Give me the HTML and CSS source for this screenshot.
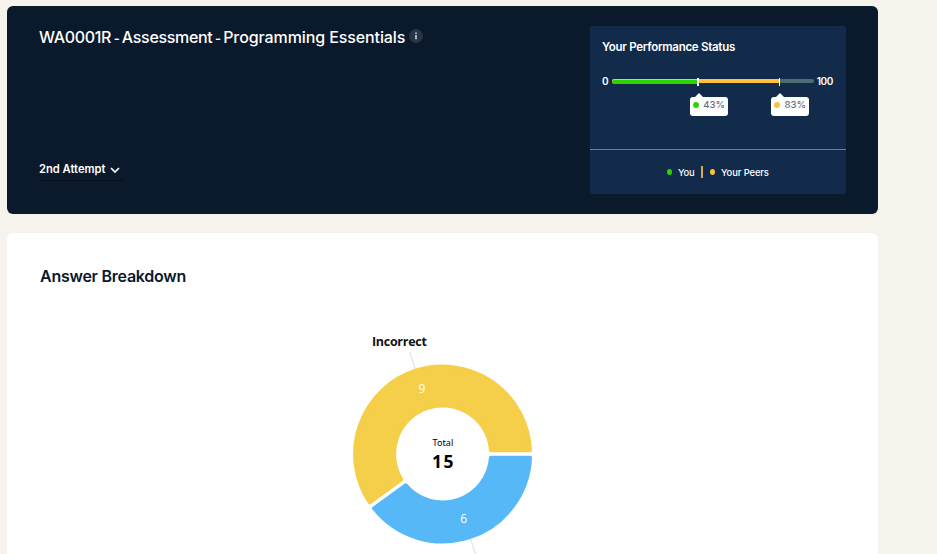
FILE: index.html
```html
<!DOCTYPE html>
<html lang="en">
<head>
<meta charset="utf-8">
<title>Assessment</title>
<link rel="stylesheet" href="styles.css">
</head>
<body>
<main class="page">
  <section class="summary">
    <div class="summary-info">
      <h1 class="title"><span class="title-text">WA0001R<span class="dash"> - </span>Assessment<span class="dash"> - </span><span class="course">Programming Essentials</span></span>
        <svg class="info" viewBox="0 0 14 14"><circle cx="7" cy="7" r="7" fill="#283546"/><path d="M7 3.5V5M7 6V10.2" stroke="#c3c8ce" stroke-width="1.7"/></svg>
      </h1>
      <div class="attempt"><span class="attempt-text">2nd Attempt</span>
        <svg class="chevron" viewBox="0 0 10 6"><path d="M1 1L5 5L9 1" fill="none" stroke="#fff" stroke-width="1.7"/></svg>
      </div>
    </div>
    <aside class="status">
      <div class="status-body">
        <h2 class="status-title">Your Performance Status</h2>
        <div class="scale">
          <span class="min">0</span>
          <div class="track">
            <div class="peers"></div>
            <div class="you"></div>
            <div class="tick tick-you"></div>
            <div class="tick tick-peers"></div>
            <div class="tip tip-you"><i class="dot green"></i><span>43%</span></div>
            <div class="tip tip-peers"><i class="dot amber"></i><span>83%</span></div>
          </div>
          <span class="max">100</span>
        </div>
      </div>
      <div class="legend">
        <i class="dot green"></i><span class="legend-you">You</span><b class="bar"></b><i class="dot amber"></i><span class="legend-peers">Your Peers</span>
      </div>
    </aside>
  </section>
  <section class="breakdown">
    <h2 class="heading">Answer Breakdown</h2>
    <svg class="chart" width="260" height="260" viewBox="-129.6 -130 260 260">
      <path class="leader" d="M-33 -102L-27 -84M27.5 84L33.5 102"/>
      <path class="slice incorrect" d="M-72.9 48.39A87.5 87.5 0 1 1 87.42 -3.7L48.36 -3.7A48.5 48.5 0 1 0 -41.3 25.43Z"/>
      <path class="slice correct" d="M87.42 3.7A87.5 87.5 0 0 1 -68.55 54.38L-36.95 31.42A48.5 48.5 0 0 0 48.36 3.7Z"/>
      <text class="label" x="-70.7" y="-108" textLength="55">Incorrect</text>
      <text class="value" x="-20.7" y="-61">9</text>
      <text class="value" x="21" y="69">6</text>
      <text class="total" x="-10.2" y="-8" textLength="21">Total</text>
      <text class="sum" x="-10.5" y="14" textLength="21.5">15</text>
    </svg>
  </section>
</main>
</body>
</html>
```
FILE: styles.css
```css
* { box-sizing: border-box; }
body {
  margin: 0;
  background: #f6f3ec;
  color: #fff;
  font-family: Inter, "Liberation Sans", sans-serif;
}
h1, h2 { margin: 0; }
.page {
  width: 871px;
  height: 554px;
  margin: 0 0 0 7px;
  padding-top: 6px;
  display: flex;
  flex-direction: column;
  gap: 19px;
}
.summary {
  height: 208px;
  flex: none;
  padding: 20px 32px;
  border-radius: 6px;
  background: #0a192b;
  display: flex;
  justify-content: space-between;
}
.summary-info {
  display: flex;
  flex-direction: column;
  justify-content: space-between;
  align-items: flex-start;
  padding: 1px 0 13px;
}
.title {
  display: flex;
  align-items: center;
  font-size: 16px;
  font-weight: 500;
  line-height: 20px;
  white-space: nowrap;
}
.title-text { width: 370px; letter-spacing: -0.32px; }
.dash {
  display: inline-block;
  width: 10.7px;
  text-align: center;
  font-size: 13px;
  font-weight: 600;
}
.course { letter-spacing: -0.1px; }
.info { width: 14px; height: 14px; margin-top: -3px; }
.attempt {
  width: 86px;
  height: 24px;
  border-bottom: 1px solid #06101c;
  display: flex;
  gap: 5px;
  font-size: 11.2px;
  font-weight: 600;
  line-height: 24px;
  white-space: nowrap;
}
.attempt-text { width: 66px; }
.chevron { width: 10px; height: 6px; margin-top: 10px; }
.status {
  width: 256px;
  height: 168px;
  border-radius: 3px;
  background: #122b4b;
}
.status-body {
  height: 124px;
  padding: 13px 13px 0 12px;
  border-bottom: 1px solid #707f94;
}
.status-title {
  font-size: 11.5px;
  font-weight: 600;
  line-height: 16px;
  letter-spacing: -0.28px;
  white-space: nowrap;
}
.scale {
  display: flex;
  align-items: center;
  margin-top: 18px;
  font-size: 10px;
  font-weight: 600;
  line-height: 16px;
}
.min { width: 10px; }
.max { width: 19px; text-align: right; white-space: nowrap; letter-spacing: -0.4px; }
.track {
  position: relative;
  width: 202px;
  height: 4px;
  border-radius: 2px;
  background: #4b6e72;
}
.peers {
  width: 83%;
  height: 4px;
  border-radius: 2px 0 0 2px;
  background: #ffc13b;
}
.you {
  position: absolute;
  left: 0;
  top: 1px;
  width: 43%;
  height: 4px;
  border-radius: 2px 0 0 2px;
  background: #2bd600;
}
.tick { position: absolute; top: -1px; height: 8px; background: #fff; }
.tick-you { left: 85px; width: 2px; }
.tick-peers { left: 167px; width: 1px; }
.tip {
  position: absolute;
  top: 18px;
  width: 38px;
  height: 19px;
  padding: 0 3px 3px;
  border-radius: 3px;
  background: #fff;
  color: #66707c;
  display: flex;
  align-items: center;
  justify-content: space-between;
  font-size: 9.6px;
  font-weight: 500;
}
.tip::before {
  content: "";
  position: absolute;
  left: 5px;
  top: -4px;
  border: 4px solid transparent;
  border-top: 0;
  border-bottom-color: #fff;
}
.tip-you { left: 78px; }
.tip-peers { left: 159px; }
.dot { width: 6px; height: 6px; border-radius: 50%; flex: none; }
.legend .dot { width: 5px; }
.green { background: #2bd600; }
.amber { background: #ffc13b; }
.legend {
  height: 44px;
  padding-left: 77px;
  display: flex;
  align-items: center;
  font-size: 9.4px;
  font-weight: 500;
  white-space: nowrap;
}
.legend-you { width: 23px; margin-left: 6px; letter-spacing: -0.2px; }
.bar { width: 2px; height: 12px; margin-right: 7px; background: #d8ac4c; }
.legend-peers { margin-left: 6px; letter-spacing: -0.1px; }
.breakdown {
  flex: 1;
  min-height: 0;
  overflow: hidden;
  padding: 32px 33px 0;
  border-radius: 6px 6px 0 0;
  background: #fff;
  color: #0a192b;
}
.heading {
  font-size: 16px;
  font-weight: 600;
  line-height: 22px;
  letter-spacing: -0.25px;
}
.chart {
  display: block;
  margin: 37px 0 0 273px;
  overflow: visible;
  font-family: "Noto Sans", sans-serif;
}
.slice { stroke-width: 4; stroke-linejoin: round; }
.incorrect { fill: #f5cf49; stroke: #f5cf49; }
.correct { fill: #57b8f7; stroke: #57b8f7; }
.leader { fill: none; stroke: #e8e8e8; stroke-width: 1.5; }
.label { font-family: "Open Sans", sans-serif; font-size: 12.5px; font-weight: 700; fill: #111; }
.value { font-family: "Open Sans", sans-serif; font-size: 12px; fill: #fff; text-anchor: middle; }
.total { font-size: 9px; fill: #000; }
.sum { font-size: 17.5px; font-weight: 700; fill: #000; }
```
